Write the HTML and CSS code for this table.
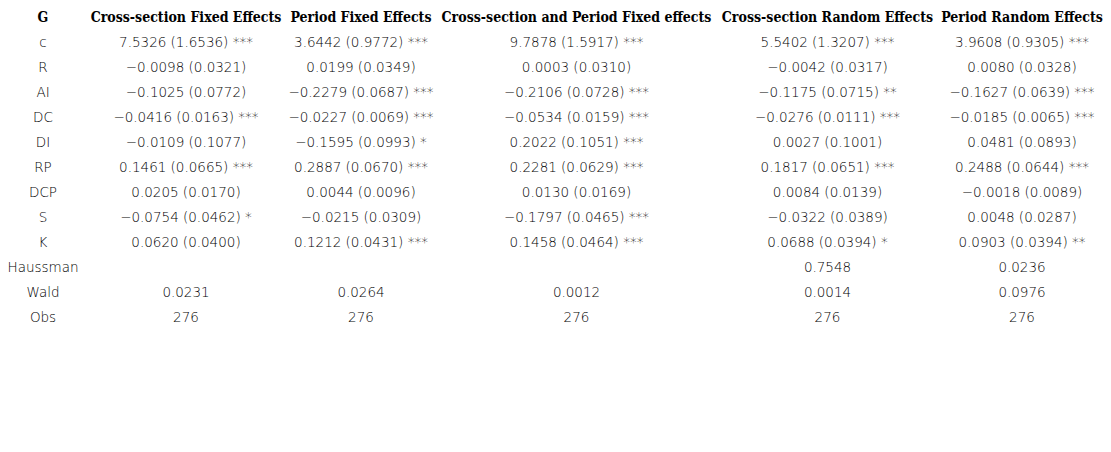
FILE: index.html
```html
<!DOCTYPE html>
<html>
<head>
<meta charset="utf-8">
<link rel="stylesheet" href="styles.css">
</head>
<body>
<table class="results">
  <colgroup>
    <col class="c0"><col class="c1"><col class="c2"><col class="c3"><col class="c4"><col class="c5">
  </colgroup>
  <thead>
    <tr><th>G</th><th>Cross-section Fixed Effects</th><th>Period Fixed Effects</th><th>Cross-section and Period Fixed effects</th><th>Cross-section Random Effects</th><th>Period Random Effects</th></tr>
  </thead>
  <tbody>
    <tr><td>c</td><td>7.5326 (1.6536) ***</td><td>3.6442 (0.9772) ***</td><td>9.7878 (1.5917) ***</td><td>5.5402 (1.3207) ***</td><td>3.9608 (0.9305) ***</td></tr>
    <tr><td>R</td><td>−0.0098 (0.0321)</td><td>0.0199 (0.0349)</td><td>0.0003 (0.0310)</td><td>−0.0042 (0.0317)</td><td>0.0080 (0.0328)</td></tr>
    <tr><td>AI</td><td>−0.1025 (0.0772)</td><td>−0.2279 (0.0687) ***</td><td>−0.2106 (0.0728) ***</td><td>−0.1175 (0.0715) **</td><td>−0.1627 (0.0639) ***</td></tr>
    <tr><td>DC</td><td>−0.0416 (0.0163) ***</td><td>−0.0227 (0.0069) ***</td><td>−0.0534 (0.0159) ***</td><td>−0.0276 (0.0111) ***</td><td>−0.0185 (0.0065) ***</td></tr>
    <tr><td>DI</td><td>−0.0109 (0.1077)</td><td>−0.1595 (0.0993) *</td><td>0.2022 (0.1051) ***</td><td>0.0027 (0.1001)</td><td>0.0481 (0.0893)</td></tr>
    <tr><td>RP</td><td>0.1461 (0.0665) ***</td><td>0.2887 (0.0670) ***</td><td>0.2281 (0.0629) ***</td><td>0.1817 (0.0651) ***</td><td>0.2488 (0.0644) ***</td></tr>
    <tr><td>DCP</td><td>0.0205 (0.0170)</td><td>0.0044 (0.0096)</td><td>0.0130 (0.0169)</td><td>0.0084 (0.0139)</td><td>−0.0018 (0.0089)</td></tr>
    <tr><td>S</td><td>−0.0754 (0.0462) *</td><td>−0.0215 (0.0309)</td><td>−0.1797 (0.0465) ***</td><td>−0.0322 (0.0389)</td><td>0.0048 (0.0287)</td></tr>
    <tr><td>K</td><td>0.0620 (0.0400)</td><td>0.1212 (0.0431) ***</td><td>0.1458 (0.0464) ***</td><td>0.0688 (0.0394) *</td><td>0.0903 (0.0394) **</td></tr>
    <tr><td>Haussman</td><td></td><td></td><td></td><td>0.7548</td><td>0.0236</td></tr>
    <tr><td>Wald</td><td>0.0231</td><td>0.0264</td><td>0.0012</td><td>0.0014</td><td>0.0976</td></tr>
    <tr><td>Obs</td><td>276</td><td>276</td><td>276</td><td>276</td><td>276</td></tr>
  </tbody>
</table>
</body>
</html>
```
FILE: styles.css
```css
html, body {
  margin: 0;
  padding: 0;
  background: #ffffff;
}
body {
  padding: 4px 0 0 0;
}
.results {
  border-collapse: collapse;
  table-layout: fixed;
  width: 1106px;
  color: #000000;
}
.c0 { width: 86px; }
.c1 { width: 200px; }
.c2 { width: 150px; }
.c3 { width: 281px; }
.c4 { width: 221px; }
.c5 { width: 168px; }
.results th {
  font-family: "DejaVu Serif Condensed", "DejaVu Serif", serif;
  font-stretch: condensed;
  font-weight: bold;
  font-size: 14px;
  text-align: center;
  height: 25px;
  padding: 0;
  white-space: nowrap;
}
.results td {
  font-family: "DejaVu Sans", sans-serif;
  font-weight: 200;
  font-size: 13.5px;
  text-align: center;
  height: 25px;
  padding: 0;
  white-space: nowrap;
}
```
